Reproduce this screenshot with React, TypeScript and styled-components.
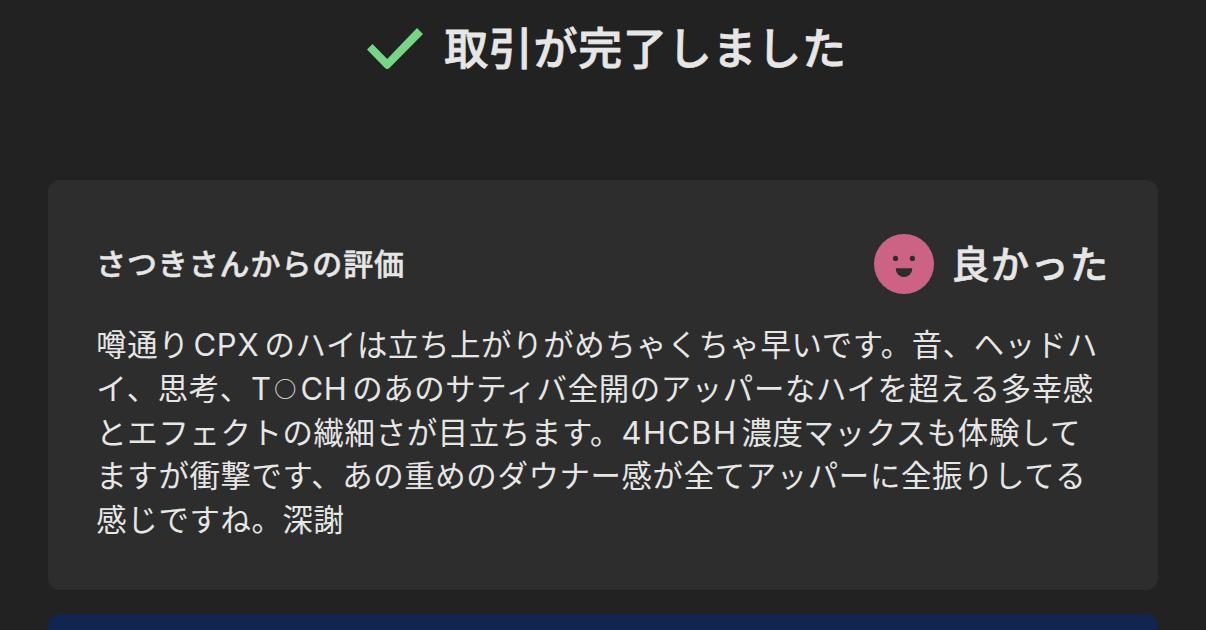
import React from "react";
import styled, { createGlobalStyle } from "styled-components";

const GlobalStyle = createGlobalStyle`
  * { box-sizing: border-box; }
  html, body { margin: 0; background: #222222; }
  body {
    height: 630px;
    overflow: hidden;
    color: #e6e6e6;
    font-family: Inter, "Noto Sans CJK JP", sans-serif;
  }
`;

const Page = styled.main`
  height: 630px;
  overflow: hidden;
  display: flex;
  flex-direction: column;
  padding: 0 48px;
`;

const Header = styled.header`
  flex: none;
  height: 180px;
  display: flex;
  justify-content: center;
  align-items: flex-start;
  padding: 16px 0 0 7px;
  gap: 20px;
`;

const CheckIcon = styled.svg`
  flex: none;
  width: 58px;
  height: 44px;
  margin-top: 10px;
`;

const Heading = styled.h1`
  margin: 0;
  font-size: 44px;
  line-height: 66px;
  font-weight: 500;
  letter-spacing: 0.75px;
  white-space: nowrap;
  -webkit-text-stroke: 0.8px currentColor;
`;

const Card = styled.section`
  flex: none;
  height: 410px;
  padding: 54px 48px 0;
  border-radius: 12px;
  background: #2d2d2d;
`;

const CardHeader = styled.div`
  display: flex;
  justify-content: space-between;
  align-items: center;
  height: 60px;
`;

const Reviewer = styled.h2`
  margin: 0;
  font-size: 30px;
  line-height: 44px;
  font-weight: 500;
  letter-spacing: 0.9px;
  -webkit-text-stroke: 0.5px currentColor;
`;

const Rating = styled.div`
  display: flex;
  align-items: center;
  gap: 17.5px;
  padding-right: 0.5px;
  font-size: 38px;
  line-height: 60px;
  font-weight: 500;
  letter-spacing: 1.5px;
  -webkit-text-stroke: 0.7px currentColor;
`;

const Face = styled.svg`
  width: 60px;
  height: 60px;
`;

const Comment = styled.p`
  margin: 30.4px 0 0;
  padding-left: 0.3px;
  font-size: 30.4px;
  line-height: 43.7px;
  letter-spacing: 0.65px;
  text-autospace: no-autospace;
`;

const Line = styled.span`
  display: block;
  height: 43.7px;
  white-space: nowrap;
`;

const Latin = styled.span<{ $before?: number; $after?: number; $tracking?: number }>`
  margin-left: ${(p) => p.$before ?? 0}px;
  margin-right: ${(p) => p.$after ?? 0}px;
  font-size: 31px;
  line-height: 1;
  letter-spacing: ${(p) => p.$tracking ?? 0.8}px;
`;

const Circle = styled.span`
  margin: 0 3.5px 0 2.5px;
  font-family: "Noto Sans CJK JP", sans-serif;
  font-size: 22px;
  line-height: 1;
  vertical-align: 3px;
`;

const NextPanel = styled.section`
  flex: none;
  height: 80px;
  margin-top: 24px;
  border-radius: 12px;
  background: #122450;
`;

export default function App() {
  return (
    <>
      <GlobalStyle />
      <Page>
        <Header>
          <CheckIcon viewBox="0 0 58 44" aria-hidden="true">
            <path
              d="M6.5 18 L21.2 33 L51 2 L57 8 L23.2 42.2 Q21.2 43.6 19.2 42.2 L1 23.6 Z"
              fill="#76d686"
            />
          </CheckIcon>
          <Heading>取引が完了しました</Heading>
        </Header>
        <Card>
          <CardHeader>
            <Reviewer>さつきさんからの評価</Reviewer>
            <Rating>
              <Face viewBox="0 0 60 60" aria-hidden="true">
                <circle cx="30" cy="30" r="30" fill="#cc6384" />
                <circle cx="21.5" cy="24.4" r="2.6" fill="#2d2d2d" />
                <circle cx="38.4" cy="24.4" r="2.6" fill="#2d2d2d" />
                <path d="M21.7 34.3 H38.3 A8.3 8.7 0 0 1 21.7 34.3 Z" fill="#2d2d2d" />
              </Face>
              <span>良かった</span>
            </Rating>
          </CardHeader>
          <Comment>
            <Line>噂通り<Latin $before={4} $after={5}>CPX</Latin>のハイは立ち上がりがめちゃくちゃ早いです。音、ヘッドハ</Line>
            <Line>イ、思考、<Latin>T</Latin><Circle>○</Circle><Latin $after={4.5}>CH</Latin>のあのサティバ全開のアッパーなハイを超える多幸感</Line>
            <Line>とエフェクトの繊細さが目立ちます。<Latin $before={0.5} $after={4} $tracking={1.4}>4HCBH</Latin>濃度マックスも体験して</Line>
            <Line>ますが衝撃です、あの重めのダウナー感が全てアッパーに全振りしてる</Line>
            <Line>感じですね。深謝</Line>
          </Comment>
        </Card>
        <NextPanel />
      </Page>
    </>
  );
}
